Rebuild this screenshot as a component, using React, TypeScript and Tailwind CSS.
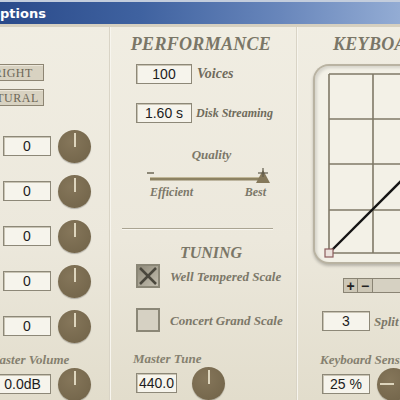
import React from "react";

const serif = "font-['Liberation_Serif',serif] italic font-bold";

function ValueBox({ value, className = "" }: { value: string; className?: string }) {
  return (
    <div
      className={`h-[20px] flex items-center justify-center bg-[#f6f4ec] border border-[#8d8878] shadow-[inset_1px_1px_0_#c9c4b4] text-[14px] leading-none text-[#1c1c1c] font-['Liberation_Sans',sans-serif] ${className}`}
    >
      {value}
    </div>
  );
}

function Knob({ angle = 0 }: { angle?: number }) {
  return (
    <div className="w-[33px] h-[33px] rounded-full shrink-0 bg-[radial-gradient(circle_at_40%_35%,#85765a,#76684d_70%,#6a5d44)] shadow-[0_1px_1px_rgba(0,0,0,0.25)] flex justify-center">
      <div
        className="w-[33px] h-[33px] flex justify-center"
        style={{ transform: `rotate(${angle}deg)` }}
      >
        <div className="w-[2px] h-[14px] mt-[3px] bg-[#ddd5bd]" />
      </div>
    </div>
  );
}

function Label({ children, className = "" }: { children: React.ReactNode; className?: string }) {
  return <span className={`${serif} text-[#6f6b5c] leading-none ${className}`}>{children}</span>;
}

function PresetButton({ text }: { text: string }) {
  return (
    <div className="w-[70px] -ml-[26px] h-[17px] flex items-center justify-center bg-[#d8d2c1] border border-[#8d8573] shadow-[inset_1px_1px_0_#ece7da] font-['Liberation_Serif',serif] text-[12px] text-[#6c6656] tracking-[0.5px]">
      {text}
    </div>
  );
}

function LeftColumn() {
  const rows = ["0", "0", "0", "0", "0"];
  return (
    <div className="w-[110px] shrink-0 flex flex-col border-r border-[#d9d4c6] shadow-[1px_0_0_#f7f5ee]">
      <div className="mt-[37px]">
        <PresetButton text="BRIGHT" />
      </div>
      <div className="mt-[8px]">
        <PresetButton text="NATURAL" />
      </div>
      <div className="mt-[23px] flex flex-col gap-[11px]">
        {rows.map((v, i) => (
          <div key={i} className="h-[34px] flex items-center gap-[7px] pl-[3px]">
            <ValueBox value={v} className="w-[48px]" />
            <Knob />
          </div>
        ))}
      </div>
      <div className="mt-[8px] h-[16px] flex items-center -ml-[12px]">
        <Label className="text-[13px] text-[#85806f]">Master Volume</Label>
      </div>
      <div className="h-[34px] flex items-center gap-[7px] -ml-[6px]">
        <ValueBox value="0.0dB" className="w-[57px]" />
        <Knob />
      </div>
    </div>
  );
}

function QualitySlider() {
  return (
    <svg width="127" height="19" viewBox="0 0 127 19" className="block">
      <line x1="2" y1="7" x2="9" y2="7" stroke="#6c6756" strokeWidth="1.5" />
      <line x1="5" y1="13" x2="116" y2="13" stroke="#8d8262" strokeWidth="3" />
      <line x1="5" y1="11.5" x2="116" y2="11.5" stroke="#c2b894" strokeWidth="0.8" />
      <polygon points="118,4 111,17 125,17" fill="#85785a" />
      <line x1="113" y1="7" x2="123" y2="7" stroke="#5f5a4b" strokeWidth="1.2" />
      <line x1="118" y1="2" x2="118" y2="11" stroke="#5f5a4b" strokeWidth="1.2" />
    </svg>
  );
}

function CheckBox({ checked }: { checked: boolean }) {
  return (
    <div
      className={`w-[24px] h-[24px] shrink-0 border-2 border-[#8b8777] ${
        checked ? "bg-[linear-gradient(135deg,#8f8a7a,#c2bdae)]" : "bg-[#d6d1c3]"
      }`}
    >
      {checked && (
        <svg width="20" height="20" viewBox="0 0 20 20">
          <line x1="2" y1="2" x2="18" y2="18" stroke="#4a473d" strokeWidth="2.5" />
          <line x1="18" y1="2" x2="2" y2="18" stroke="#4a473d" strokeWidth="2.5" />
        </svg>
      )}
    </div>
  );
}

function MiddleColumn() {
  return (
    <div className="w-[187px] shrink-0 flex flex-col border-r border-[#d9d4c6] shadow-[1px_0_0_#f7f5ee]">
      <div className="mt-[7px] h-[20px] flex items-center justify-center pr-[4px]">
        <Label className="text-[18px] text-[#7a7667] tracking-[0.3px]">PERFORMANCE</Label>
      </div>
      <div className="mt-[10px] pl-[26px] flex items-center gap-[5px]">
        <ValueBox value="100" className="w-[56px]" />
        <Label className="text-[14px]">Voices</Label>
      </div>
      <div className="mt-[19px] pl-[26px] flex items-center gap-[4px]">
        <ValueBox value="1.60 s" className="w-[56px]" />
        <Label className="text-[12px]">Disk Streaming</Label>
      </div>
      <div className="mt-[23px] h-[16px] pl-[40px] w-[163px] flex items-center justify-center">
        <Label className="text-[13px] text-[#7c7869]">Quality</Label>
      </div>
      <div className="mt-[4px] pl-[35px]">
        <QualitySlider />
      </div>
      <div className="h-[14px] pl-[40px] w-[156px] flex items-center justify-between">
        <Label className="text-[12px] text-[#7c7869]">Efficient</Label>
        <Label className="text-[12px] text-[#7c7869]">Best</Label>
      </div>
      <div className="mt-[29px] ml-[12px] w-[151px] h-[1px] bg-[#aaa492] shadow-[0_1px_0_#f8f6ef]" />
      <div className="mt-[15px] h-[18px] flex items-center justify-center pl-[16px]">
        <Label className="text-[16px] text-[#7a7667]">TUNING</Label>
      </div>
      <div className="mt-[2px] pl-[26px] flex items-center gap-[10px]">
        <CheckBox checked />
        <Label className="text-[13px] text-[#7c7869]">Well Tempered Scale</Label>
      </div>
      <div className="mt-[20px] pl-[26px] flex items-center gap-[10px]">
        <CheckBox checked={false} />
        <Label className="text-[13px] text-[#7c7869]">Concert Grand Scale</Label>
      </div>
      <div className="mt-[18px] h-[16px] pl-[23px] flex items-center">
        <Label className="text-[13px] text-[#85806f]">Master Tune</Label>
      </div>
      <div className="h-[34px] pl-[26px] flex items-center gap-[15px]">
        <ValueBox value="440.0" className="w-[41px]" />
        <Knob />
      </div>
    </div>
  );
}

function VelocityCurve() {
  const rows = [8, 53, 98, 144, 187];
  const cols = [14, 58];
  return (
    <svg width="100" height="196" viewBox="0 0 100 196" className="block">
      {rows.map((y) => (
        <line key={y} x1="14" y1={y} x2="100" y2={y} stroke="#7f7967" strokeWidth="1.6" />
      ))}
      {cols.map((x) => (
        <line key={x} x1={x} y1="8" x2={x} y2="187" stroke="#7f7967" strokeWidth="1.6" />
      ))}
      <line x1="14" y1="187" x2="100" y2="101" stroke="#141414" strokeWidth="2.4" />
      <rect x="10" y="183" width="8" height="8" fill="#ece2dc" stroke="#8c5d5d" strokeWidth="1.2" />
    </svg>
  );
}

function RightColumn() {
  return (
    <div className="flex-1 flex flex-col pl-[16px]">
      <div className="mt-[7px] h-[20px] flex items-center pl-[20px] whitespace-nowrap">
        <Label className="text-[18px] text-[#7a7667] tracking-[0.3px]">KEYBOARD</Label>
      </div>
      <div className="mt-[10px] h-[200px] w-[140px] rounded-l-[16px] border-l-2 border-t-2 border-b-2 border-[#b9b3a2] bg-[#f3f1e7] shadow-[inset_2px_2px_3px_rgba(0,0,0,0.12),0_2px_3px_rgba(0,0,0,0.22)]">
        <VelocityCurve />
      </div>
      <div className="mt-[14px] ml-[30px] h-[15px] flex">
        <div className="w-[15px] h-[15px] flex items-center justify-center bg-[#cdc7b6] border border-[#8a8474] text-[14px] leading-none font-bold text-[#222] font-['Liberation_Sans',sans-serif]">
          +
        </div>
        <div className="w-[15px] h-[15px] flex items-center justify-center bg-[#cdc7b6] border border-l-0 border-[#8a8474] text-[14px] leading-none font-bold text-[#222] font-['Liberation_Sans',sans-serif]">
          −
        </div>
        <div className="w-[60px] h-[15px] bg-[#d6d1c2] border border-l-0 border-[#8a8474]" />
      </div>
      <div className="mt-[18px] ml-[9px] flex items-center gap-[4px] whitespace-nowrap">
        <ValueBox value="3" className="w-[48px]" />
        <Label className="text-[13px] text-[#7c7869]">Split</Label>
      </div>
      <div className="mt-[20px] h-[16px] ml-[7px] flex items-center whitespace-nowrap">
        <Label className="text-[13px] text-[#85806f]">Keyboard Sensitivity</Label>
      </div>
      <div className="h-[34px] ml-[9px] flex items-center gap-[7px]">
        <ValueBox value="25 %" className="w-[48px] shrink-0" />
        <Knob angle={-90} />
      </div>
    </div>
  );
}

export default function App() {
  return (
    <div className="w-[400px] h-[400px] overflow-hidden flex flex-col bg-[linear-gradient(180deg,#f1eee3_0%,#ece8dc_60%,#e2ddcc_100%)]">
      {/* window caption */}
      <div className="h-[24px] shrink-0 border-t-2 border-[#c3cddd] bg-[linear-gradient(90deg,#2a4a8a_0%,#3f62a0_35%,#6886bb_70%,#93acd4_100%)] flex items-center">
        <span className="-ml-[11px] text-white font-bold text-[13px] font-['DejaVu_Sans',sans-serif] leading-none">
          Options
        </span>
      </div>
      <div className="h-[3px] shrink-0 bg-[#d6d0c0]" />
      <div className="flex flex-1">
        <LeftColumn />
        <MiddleColumn />
        <RightColumn />
      </div>
    </div>
  );
}
